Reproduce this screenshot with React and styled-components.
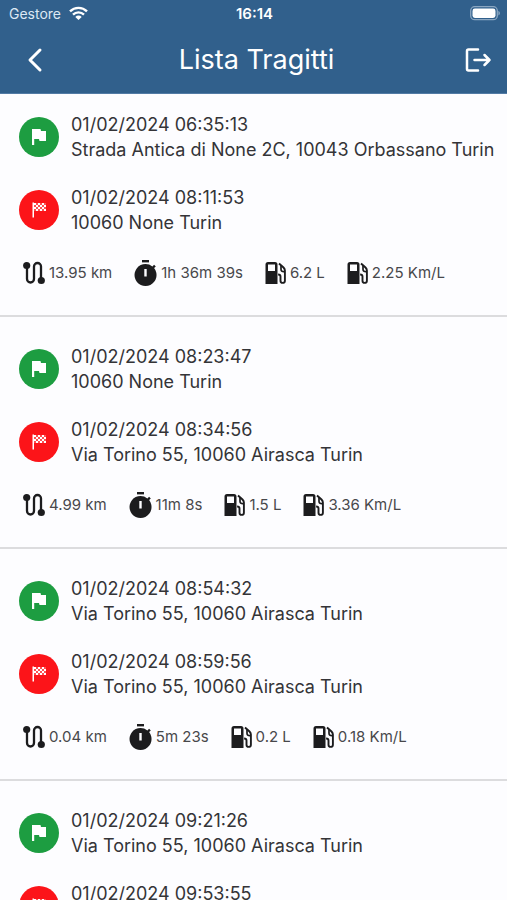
import React from "react";
import styled, { createGlobalStyle } from "styled-components";

const GlobalStyle = createGlobalStyle`
  * { box-sizing: border-box; }
  html { scrollbar-width: none; }
  body {
    margin: 0;
    background: #fdfdff;
    color: #343437;
    font-family: Inter, "Liberation Sans", sans-serif;
  }
`;

const Header = styled.header`
  background: #31608c;
  color: #fff;
  border-bottom: 1px solid #527ba5;
`;

const StatusBar = styled.div`
  display: grid;
  grid-template-columns: 1fr auto 1fr;
  align-items: center;
  height: 27px;
  padding: 0 7px 0 9px;
  font-size: 14px;
  line-height: 20px;
`;

const Carrier = styled.div`
  display: flex;
  align-items: center;
  gap: 8px;
  color: #dce8f4;
`;

const Clock = styled.time`
  font-size: 15px;
  font-weight: 600;
`;

const BatteryIcon = styled.svg`
  justify-self: end;
  display: block;
`;

const NavBar = styled.div`
  display: grid;
  grid-template-columns: 40px 1fr 40px;
  align-items: center;
  height: 66px;
  padding: 0 9px 0 15px;
`;

const Title = styled.h1`
  margin: 0;
  font-size: 27px;
  line-height: 32px;
  font-weight: 400;
  text-align: center;
`;

const IconButton = styled.button`
  display: flex;
  align-items: center;
  justify-content: center;
  height: 40px;
  padding: 0;
  border: 0;
  background: none;
  color: inherit;
  cursor: pointer;
`;

const TripList = styled.ul`
  margin: 0;
  padding: 0;
  list-style: none;
`;

const Trip = styled.li`
  padding: 27px 12px 27px 19px;
  border-bottom: 2px solid #dcdcde;
  &:first-child { padding-top: 18px; }
`;

const Stop = styled.div`
  display: flex;
  align-items: center;
  gap: 12px;
  margin-bottom: 23px;
`;

const Badge = styled.div`
  display: flex;
  flex: none;
  align-items: center;
  justify-content: center;
  width: 40px;
  height: 40px;
  border-radius: 50%;
  background: ${({ $end }) => ($end ? "#fc1419" : "#1d9d41")};
`;

const StopText = styled.div`
  font-size: 18px;
  line-height: 25px;
  white-space: nowrap;
`;

const Stats = styled.div`
  display: flex;
  align-items: center;
  gap: 22px;
  height: 30px;
  padding-left: 4px;
`;

const Stat = styled.div`
  display: flex;
  align-items: center;
  gap: 4px;
  font-size: 15px;
  line-height: 20px;
  color: #48484b;
  white-space: nowrap;
`;

const StatIcon = styled.svg`
  display: block;
  flex: none;
  color: #1c1c1e;
`;

const WifiIcon = () => (
  <svg width="19" height="15" viewBox="0 0 19 15" fill="none" stroke="#fff" strokeWidth="2.4" aria-hidden="true">
    <path d="M1 5.3a12.2 12.2 0 0 1 17 0M4 8.6a8 8 0 0 1 11 0" />
    <path d="M9.5 14 6.3 10.9a4.6 4.6 0 0 1 6.4 0Z" fill="#fff" stroke="none" />
  </svg>
);

const Battery = () => (
  <BatteryIcon width="30" height="15" viewBox="0 0 30 15" aria-label="Batteria" role="img">
    <rect x=".7" y=".7" width="26.6" height="13" rx="4" fill="none" stroke="#8aa6c1" strokeWidth="1.3" />
    <rect x="2.5" y="2.5" width="23" height="9.4" rx="2.4" fill="#fff" />
    <path d="M28.4 5v4.4c2-.7 2-3.7 0-4.4Z" fill="#8aa6c1" />
  </BatteryIcon>
);

const BackIcon = () => (
  <svg width="26" height="28" viewBox="0 0 26 28" fill="none" stroke="currentColor" strokeWidth="3" strokeLinecap="round" strokeLinejoin="round" aria-hidden="true">
    <path d="M18 4 8 14l10 10" />
  </svg>
);

const ExitIcon = () => (
  <svg width="28" height="26" viewBox="0 0 28 26" fill="none" stroke="currentColor" strokeWidth="2.5" strokeLinecap="round" strokeLinejoin="round" aria-hidden="true">
    <path d="M14 2.500H4.500a1.500 1.500 0 0 0-1.500 1.500v18a1.500 1.500 0 0 0 1.500 1.500H14M10.500 13h15M20.500 8l5 5-5 5" />
  </svg>
);

const FlagIcon = () => (
  <svg width="18" height="18" viewBox="0 0 18 18" fill="#fff" aria-hidden="true">
    <path d="M2 1h8.500l.5 2h5v10h-6.500L9 11H4.200v6H2Z" />
  </svg>
);

const CheckeredIcon = () => (
  <svg width="18" height="18" viewBox="0 0 18 18" aria-hidden="true">
    <path d="M2.500 1.500H4v15H2.500Z" fill="#fff" />
    <path
      d="M4 2h2v2H4zM8 2h2v2H8zM12 2h2v2h-2zM6 4h2v2H6zM10 4h2v2h-2zM14 4h2v2h-2zM4 6h2v2H4zM8 6h2v2H8zM12 6h2v2h-2zM6 8h2v2H6zM10 8h2v2h-2zM14 8h2v2h-2z"
      fill="#fff"
    />
    <path d="M4 2h12v8H4Z" fill="#fff" opacity=".25" />
  </svg>
);

const RouteIcon = () => (
  <StatIcon width="22" height="24" viewBox="0 0 22 24" aria-hidden="true">
    <path
      d="M4 5v13a3.500 3.500 0 0 0 7 0V5.500a3.500 3.500 0 0 1 7 0V19"
      fill="none" stroke="currentColor" strokeWidth="2.300"
    />
    <circle cx="3.700" cy="4.500" r="3.600" fill="currentColor" />
    <circle cx="18.300" cy="19.500" r="3.600" fill="currentColor" />
  </StatIcon>
);

const TimerIcon = () => (
  <StatIcon width="23" height="28" viewBox="0 0 23 28" fill="currentColor" aria-hidden="true">
    <path d="M8 1h7v2.400H8Z" />
    <path fillRule="evenodd" d="M11.500 5a11 11 0 0 1 6.900 2.400l1.700-1.700 1.700 1.700-1.700 1.700A11 11 0 1 1 11.500 5Zm-1.200 5v7.500h2.400V10Z" />
  </StatIcon>
);

const FuelIcon = () => (
  <StatIcon width="21" height="24" viewBox="0 0 21 24" aria-hidden="true">
    <path fill="currentColor" fillRule="evenodd" d="M3 1h7a2.500 2.500 0 0 1 2.500 2.500V23H.5V3.500A2.500 2.500 0 0 1 3 1Zm0 2.500V10h7V3.500Z" />
    <path
      d="m14 2.500 4.500 4c.9.900 1.400 1.800 1.400 3v10.200a2.200 2.200 0 0 1-4.400 0v-4.200c0-1.300-.8-2-2.400-2"
      fill="none" stroke="currentColor" strokeWidth="1.900" strokeLinejoin="round"
    />
    <path d="M16 4.500v3.700c0 2 1.500 2.600 3.500 2.300" fill="none" stroke="currentColor" strokeWidth="1.700" />
  </StatIcon>
);

const NONE = "10060 None Turin";
const AIRASCA = "Via Torino 55, 10060 Airasca Turin";

const trips = [
  { start: ["06:35:13", "Strada Antica di None 2C, 10043 Orbassano Turin"], end: ["08:11:53", NONE], stats: ["13.95 km", "1h 36m 39s", "6.2 L", "2.25 Km/L"] },
  { start: ["08:23:47", NONE], end: ["08:34:56", AIRASCA], stats: ["4.99 km", "11m 8s", "1.5 L", "3.36 Km/L"] },
  { start: ["08:54:32", AIRASCA], end: ["08:59:56", AIRASCA], stats: ["0.04 km", "5m 23s", "0.2 L", "0.18 Km/L"] },
  { start: ["09:21:26", AIRASCA], end: ["09:53:55"] },
];

const statIcons = [RouteIcon, TimerIcon, FuelIcon, FuelIcon];

const TripStop = ({ stop: [time, place], end }) => (
  <Stop>
    <Badge $end={end}>{end ? <CheckeredIcon /> : <FlagIcon />}</Badge>
    <StopText>
      <div>{`01/02/2024 ${time}`}</div>
      <div>{place || "\u00a0"}</div>
    </StopText>
  </Stop>
);

export default function App() {
  return (
    <>
      <GlobalStyle />
      <Header>
        <StatusBar>
          <Carrier>Gestore <WifiIcon /></Carrier>
          <Clock>16:14</Clock>
          <Battery />
        </StatusBar>
        <NavBar>
          <IconButton aria-label="Indietro"><BackIcon /></IconButton>
          <Title>Lista Tragitti</Title>
          <IconButton aria-label="Esci"><ExitIcon /></IconButton>
        </NavBar>
      </Header>
      <TripList>
        {trips.map((trip) => (
          <Trip key={trip.start[0]}>
            <TripStop stop={trip.start} />
            <TripStop stop={trip.end} end />
            {trip.stats && (
              <Stats>
                {trip.stats.map((value, i) => {
                  const Icon = statIcons[i];
                  return <Stat key={i}><Icon />{value}</Stat>;
                })}
              </Stats>
            )}
          </Trip>
        ))}
      </TripList>
    </>
  );
}
